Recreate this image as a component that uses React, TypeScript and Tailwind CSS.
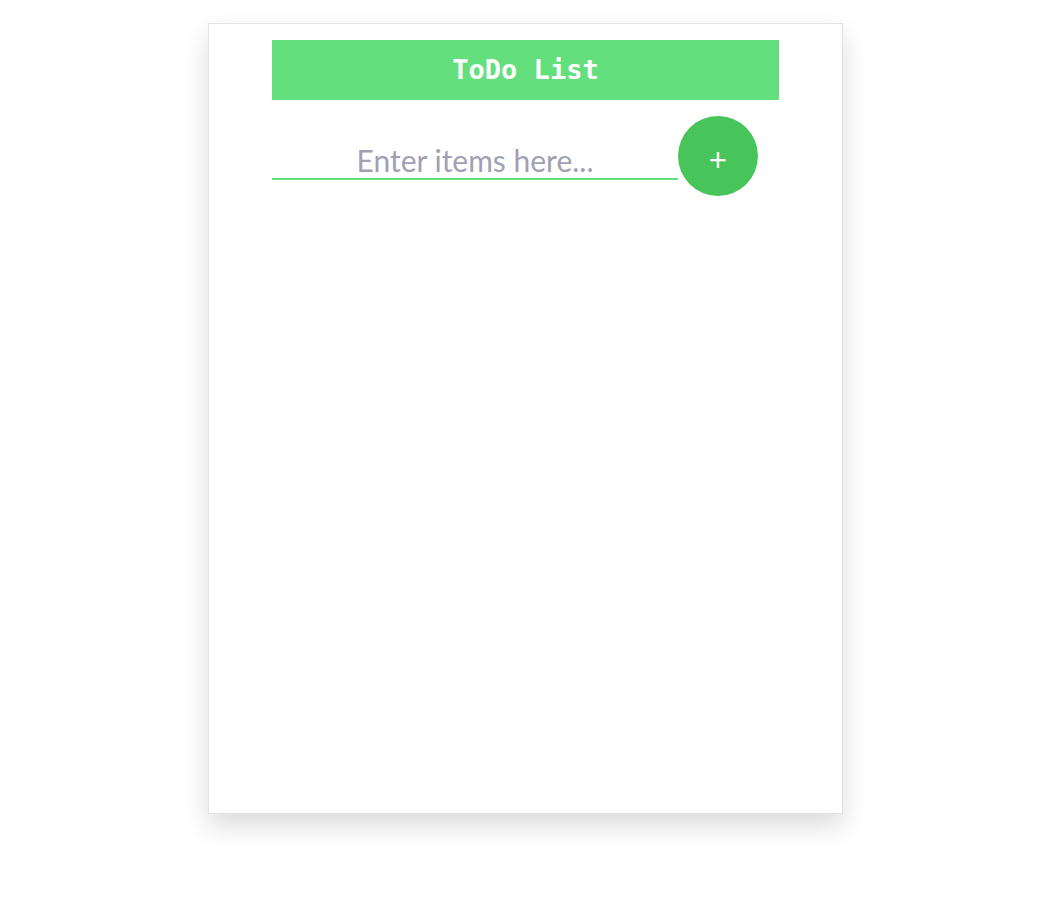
import React from "react";

export default function App() {
  return (
    <div className="min-h-[908px] w-full bg-white pt-[23px]">
      <div className="mx-auto flex h-[791px] w-[635px] flex-col items-center border border-[#e3e3e3] bg-white pt-[16px] shadow-[0_12px_24px_rgba(0,0,0,0.14)]">
        <div className="flex h-[60px] w-[507px] items-center justify-center bg-[#64df7d]">
          <h1 className="text-[27px] font-bold text-white" style={{ fontFamily: '"DejaVu Sans Mono", monospace' }}>
            ToDo List
          </h1>
        </div>
        <div className="mt-[16px] flex w-[507px] items-start">
          <input
            type="text"
            placeholder="Enter items here..."
            className="mt-[24px] h-[40px] w-[406px] border-b-2 border-[#64df7d] bg-transparent pt-[2px] text-center text-[30px] leading-none text-[#555] outline-none placeholder:text-[#a09fb4]"
            style={{ fontFamily: 'Lato, "Open Sans", sans-serif' }}
          />
          <button
            className="flex h-[80px] w-[80px] items-center justify-center rounded-full bg-[#47c55a] pt-[7px] text-[32px] leading-none text-white"
            style={{ fontFamily: '"Open Sans", sans-serif' }}
          >
            +
          </button>
        </div>
      </div>
    </div>
  );
}
